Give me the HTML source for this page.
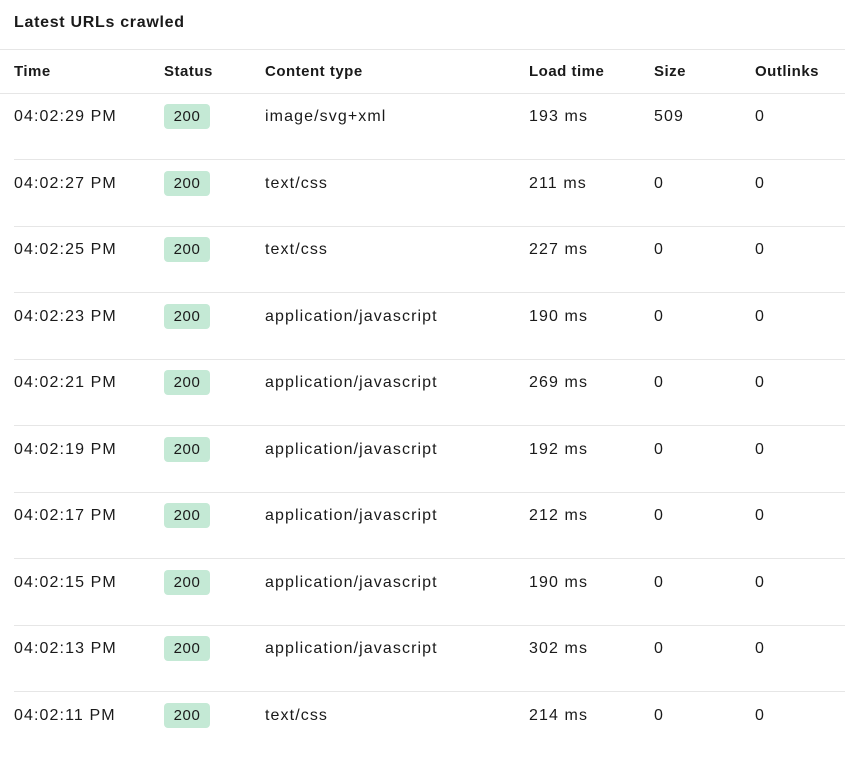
<!DOCTYPE html>
<html><head><meta charset="utf-8"><style>
body{margin:0;width:845px;height:757px;background:#fff;font-family:"Liberation Sans",sans-serif;color:#1a1a1a;position:relative;overflow:hidden}
.t{position:absolute;left:14px;top:13px;font-size:16px;font-weight:bold;line-height:20px;letter-spacing:0.7px}
.hl{position:absolute;left:0;right:0;height:1px;background:#e6e6e6}
.rl{position:absolute;left:14px;right:0;height:1px;background:#e6e6e6}
.c{position:absolute;font-size:16px;line-height:20px;white-space:nowrap;letter-spacing:1.1px}
.h{font-weight:bold;font-size:15px;letter-spacing:0.5px}
.b{position:absolute;left:164px;width:46px;height:25px;background:#c4e9d5;border-radius:4px;font-size:15px;line-height:25px;text-align:center;color:#1a1a1a;letter-spacing:0.6px}
</style></head><body>
<div class="t">Latest URLs crawled</div>
<div class="hl" style="top:49px"></div>
<div class="c h" style="left:14px;top:62px">Time</div>
<div class="c h" style="left:164px;top:62px">Status</div>
<div class="c h" style="left:265px;top:62px">Content type</div>
<div class="c h" style="left:529px;top:62px">Load time</div>
<div class="c h" style="left:654px;top:62px">Size</div>
<div class="c h" style="left:755px;top:62px">Outlinks</div>
<div class="hl" style="top:93px"></div>
<div id="rows"></div>
<script>
var d=[["04:02:29 PM","image/svg+xml","193 ms","509"],["04:02:27 PM","text/css","211 ms","0"],["04:02:25 PM","text/css","227 ms","0"],["04:02:23 PM","application/javascript","190 ms","0"],["04:02:21 PM","application/javascript","269 ms","0"],["04:02:19 PM","application/javascript","192 ms","0"],["04:02:17 PM","application/javascript","212 ms","0"],["04:02:15 PM","application/javascript","190 ms","0"],["04:02:13 PM","application/javascript","302 ms","0"],["04:02:11 PM","text/css","214 ms","0"]];
var h="";
d.forEach(function(r,i){var y=93+i*66.5;var ty=y+14;
h+='<div class="c" style="left:14px;top:'+ty+'px">'+r[0]+'</div>';
h+='<div class="b" style="top:'+(y+11)+'px">200</div>';
h+='<div class="c" style="left:265px;top:'+ty+'px">'+r[1]+'</div>';
h+='<div class="c" style="left:529px;top:'+ty+'px">'+r[2]+'</div>';
h+='<div class="c" style="left:654px;top:'+ty+'px">'+r[3]+'</div>';
h+='<div class="c" style="left:755px;top:'+ty+'px">0</div>';
if(i<9)h+='<div class="rl" style="top:'+Math.round(y+66)+'px"></div>';});
document.getElementById("rows").innerHTML=h;
</script>
</body></html>
